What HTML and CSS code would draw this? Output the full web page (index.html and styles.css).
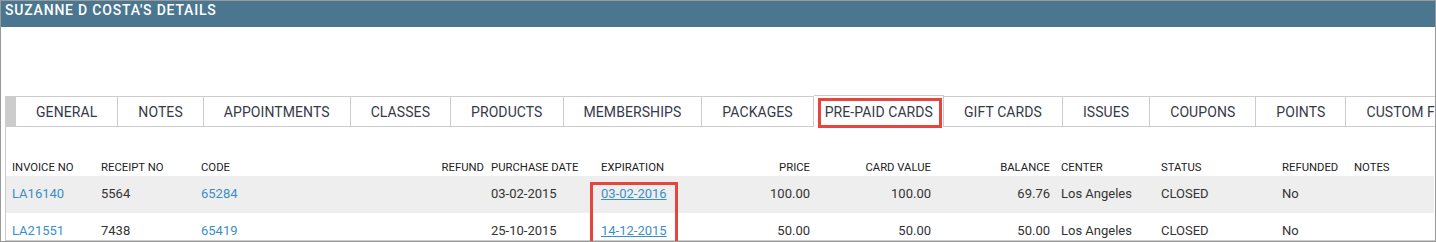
FILE: index.html
```html
<!DOCTYPE html>
<html lang="en">
<head>
    <meta charset="UTF-8">
    <title>Client Details</title>
    <link rel="stylesheet" href="styles.css">
</head>
<body>
    <div class="client-window">
        <div class="client-title">SUZANNE D COSTA'S DETAILS</div>

        <div class="client-panel">
            <ul class="tab-strip">
                <li>GENERAL</li>
                <li>NOTES</li>
                <li>APPOINTMENTS</li>
                <li>CLASSES</li>
                <li>PRODUCTS</li>
                <li>MEMBERSHIPS</li>
                <li>PACKAGES</li>
                <li class="active">PRE-PAID CARDS</li>
                <li>GIFT CARDS</li>
                <li>ISSUES</li>
                <li>COUPONS</li>
                <li>POINTS</li>
                <li>CUSTOM FIELDS</li>
            </ul>

            <div class="grid-wrap">
                <table class="card-grid">
                    <colgroup>
                        <col style="width: 89px">
                        <col style="width: 100px">
                        <col style="width: 200px">
                        <col style="width: 90px">
                        <col style="width: 110px">
                        <col style="width: 105px">
                        <col style="width: 116px">
                        <col style="width: 121px">
                        <col style="width: 119px">
                        <col style="width: 99px">
                        <col style="width: 121px">
                        <col style="width: 72px">
                        <col>
                    </colgroup>
                    <thead>
                        <tr>
                            <th>INVOICE NO</th>
                            <th>RECEIPT NO</th>
                            <th>CODE</th>
                            <th class="num refund">REFUND</th>
                            <th>PURCHASE DATE</th>
                            <th>EXPIRATION</th>
                            <th class="num">PRICE</th>
                            <th class="num">CARD VALUE</th>
                            <th class="num">BALANCE</th>
                            <th class="center">CENTER</th>
                            <th>STATUS</th>
                            <th>REFUNDED</th>
                            <th>NOTES</th>
                        </tr>
                    </thead>
                    <tbody>
                        <tr>
                            <td><a class="link" href="#">LA16140</a></td>
                            <td>5564</td>
                            <td><a class="link" href="#">65284</a></td>
                            <td class="num refund"></td>
                            <td>03-02-2015</td>
                            <td><a class="link expiry" href="#">03-02-2016</a></td>
                            <td class="num">100.00</td>
                            <td class="num">100.00</td>
                            <td class="num">69.76</td>
                            <td class="center">Los Angeles</td>
                            <td>CLOSED</td>
                            <td>No</td>
                            <td></td>
                        </tr>
                        <tr>
                            <td><a class="link" href="#">LA21551</a></td>
                            <td>7438</td>
                            <td><a class="link" href="#">65419</a></td>
                            <td class="num refund"></td>
                            <td>25-10-2015</td>
                            <td><a class="link expiry" href="#">14-12-2015</a></td>
                            <td class="num">50.00</td>
                            <td class="num">50.00</td>
                            <td class="num">50.00</td>
                            <td class="center">Los Angeles</td>
                            <td>CLOSED</td>
                            <td>No</td>
                            <td></td>
                        </tr>
                    </tbody>
                </table>
                <div class="highlight-col"></div>
            </div>
        </div>
    </div>
</body>
</html>
```

FILE: styles.css
```css
body {
    margin: 0;
    font-family: Roboto, "Liberation Sans", Arial, sans-serif;
    background-color: #ffffff;
}
.client-window {
    width: 1436px;
    height: 242px;
    box-sizing: border-box;
    border: 1px solid #999;
    overflow: hidden;
}
.client-title {
    height: 26px;
    box-sizing: border-box;
    padding: 1px 4px 0;
    background-color: #4a7690;
    color: #ffffff;
    font-size: 14px;
    font-weight: 500;
    letter-spacing: 0.8px;
    line-height: 16px;
}
.client-panel {
    margin: 69px 0 0 4px;
    height: 145px;
    box-sizing: border-box;
    border-left: 1px solid #ccc;
    border-bottom: 1px solid #ccc;
    overflow-x: clip;
}
.tab-strip {
    display: flex;
    margin: 0;
    padding: 0;
    list-style: none;
    height: 31px;
    box-sizing: border-box;
    border-left: 10px solid #ccc;
    border-bottom: 1px solid #ccc;
}
.tab-strip li {
    flex: none;
    padding: 1px 20px 0;
    border-top: 1px solid #ccc;
    border-right: 1px solid #ccc;
    background-color: #ffffff;
    color: #363a48;
    font-size: 14px;
    letter-spacing: 0.08px;
    line-height: 28px;
    white-space: nowrap;
}
.tab-strip li.active {
    position: relative;
    margin: -1px 0 -1px;
    padding: 1px 10px 0 11px;
    line-height: 30px;
}
.tab-strip li.active::after {
    content: "";
    position: absolute;
    left: 4px;
    right: 1px;
    top: 2px;
    bottom: -1px;
    border: 3px solid #e5453d;
}
.grid-wrap {
    position: relative;
}
.card-grid {
    width: 1428px;
    table-layout: fixed;
    border-collapse: collapse;
    margin-top: 31px;
}
.card-grid th {
    height: 18px;
    padding: 0 6px;
    font-size: 11.3px;
    font-weight: 400;
    color: #222;
    text-align: left;
    white-space: nowrap;
}
.card-grid td {
    height: 34px;
    padding: 0 6px 3px;
    font-size: 13px;
    color: #333;
    white-space: nowrap;
}
.card-grid tbody tr:nth-child(odd) td {
    background-color: #eeeeee;
}
.card-grid .num {
    text-align: right;
}
.card-grid .refund {
    padding-right: 1px;
}
.card-grid .center {
    padding-left: 5px;
}
.link {
    color: #3a8fc7;
    text-decoration: none;
}
.link.expiry {
    text-decoration: underline;
}
.highlight-col {
    position: absolute;
    left: 584px;
    top: 24px;
    width: 88px;
    height: 87px;
    box-sizing: border-box;
    border: 3px solid #e5453d;
}
```
